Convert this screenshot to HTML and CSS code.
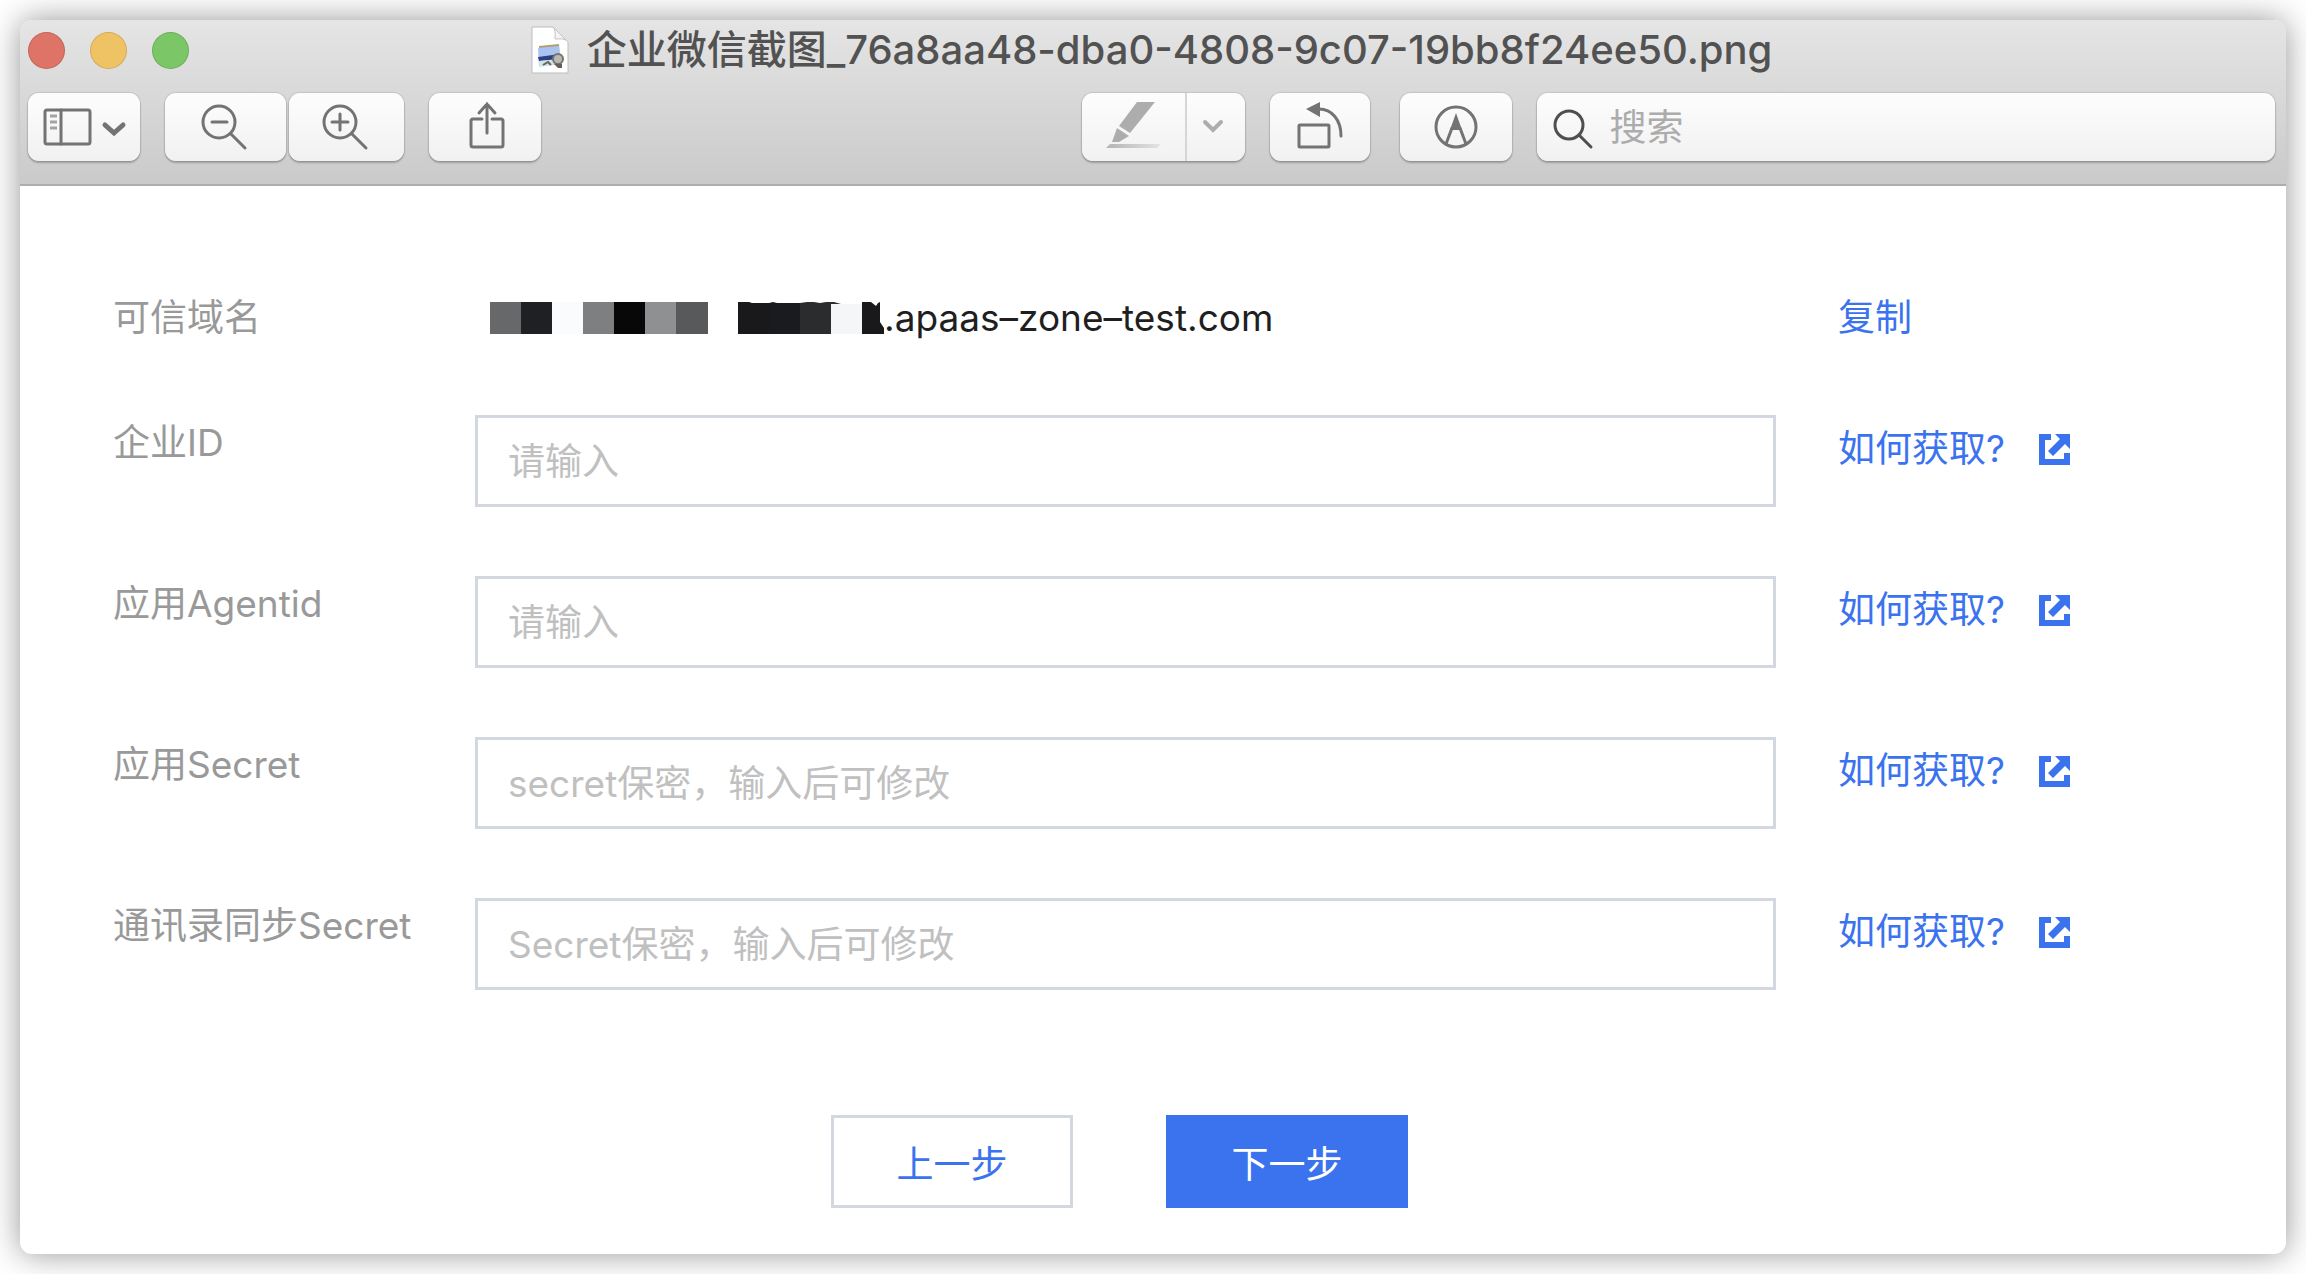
FILE: index.html
```html
<!DOCTYPE html>
<html lang="zh-CN">
<head>
  <meta charset="UTF-8">
  <title>企业微信截图</title>
  <meta name="viewport" content="width=device-width, initial-scale=1.0">
  <link rel="stylesheet" href="styles.css">
</head>
<body>
  <div class="window">
    <header class="chrome">
      <div class="titlebar">
        <div class="lights">
          <button class="light red" aria-label="关闭"></button>
          <button class="light yellow" aria-label="最小化"></button>
          <button class="light green" aria-label="缩放"></button>
        </div>
        <h1 class="title">
          <svg width="38" height="48" viewBox="0 0 38 48">
            <path d="M1 1H22L37 16V47H1Z" fill="#fff" stroke="#bdbdbd"/>
            <path d="M22 1C25 5 24 9 24 13C29 13 34 12 37 16Z" fill="#f4f4f4" stroke="#c4c4c4"/>
            <path d="M8 20L28 18L29 37L9 39Z" fill="#b39b74"/>
            <path d="M7 22L28 20L30 37L8 40Z" fill="#a9c4f3"/>
            <path d="M7 31L29 28V33L8 35Z" fill="#28427f"/>
            <path d="M8 35L29 33L30 38L8 41Z" fill="#cfe3ee"/>
            <path d="M12 39L17 36L20 39" stroke="#6b6257" stroke-width="2" fill="none"/>
            <circle cx="27" cy="33" r="5" fill="#b9b9b4" stroke="#77726b" stroke-width="2"/>
            <path d="M23 38H31V42H27Z" fill="#645f58"/>
          </svg>
          <span>企业微信截图_76a8aa48-dba0-4808-9c07-19bb8f24ee50.png</span>
        </h1>
      </div>

      <div class="toolbar">
        <div class="tools-left">
          <button class="tool" aria-label="边栏">
            <svg width="112" height="68" viewBox="0 0 112 68">
              <rect x="17" y="17" width="45" height="34" rx="2" class="line"/>
              <path d="M33 17V51" class="line"/>
              <path d="M22 23H29M22 29H29M22 35H29" stroke="#a3a3a3" stroke-width="3"/>
              <path d="M77 32L86 40L95 32" class="line bold"/>
            </svg>
          </button>
          <div class="zoom">
            <button class="tool" aria-label="缩小">
              <svg width="121" height="68" viewBox="0 0 121 68">
                <circle cx="54" cy="29" r="16" class="line"/>
                <path d="M47 29H62M66 41L80 55" class="line"/>
              </svg>
            </button>
            <button class="tool" aria-label="放大">
              <svg width="115" height="68" viewBox="0 0 115 68">
                <circle cx="51" cy="29" r="16" class="line"/>
                <path d="M43 29H59M51 21V37M63 41L77 55" class="line"/>
              </svg>
            </button>
          </div>
          <button class="tool" aria-label="共享">
            <svg width="112" height="68" viewBox="0 0 112 68">
              <path d="M53 26H44Q42 26 42 28V52Q42 54 44 54H72Q74 54 74 52V28Q74 26 72 26H63" class="line"/>
              <path d="M58 40V11M50 20L58 11L66 20" class="line"/>
            </svg>
          </button>
        </div>

        <div class="tool split">
          <button aria-label="高亮标记">
            <svg width="103" height="68" viewBox="0 0 103 68">
              <defs>
                <linearGradient id="ink">
                  <stop offset="0" stop-color="#b4b4b4"/>
                  <stop offset="1" stop-color="#e4e4e4"/>
                </linearGradient>
              </defs>
              <path d="M55 9H73L48 40L37 33Z" fill="#adadad"/>
              <path d="M35 35L47 43L37 49H30Z" fill="#adadad"/>
              <path d="M28 51H79L75 55H24Z" fill="url(#ink)"/>
            </svg>
          </button>
          <button aria-label="高亮颜色">
            <svg width="58" height="68" viewBox="0 0 58 68">
              <path d="M18 29L26 37L34 29" class="line bold pale"/>
            </svg>
          </button>
        </div>
        <button class="tool" aria-label="旋转">
          <svg width="100" height="68" viewBox="0 0 100 68">
            <rect x="29" y="32" width="30" height="22" rx="1" class="line"/>
            <path d="M49 16C62 16 71 27 71 43" class="line"/>
            <path d="M36 16L50 9V24Z" fill="#737373"/>
          </svg>
        </button>
        <button class="tool markup" aria-label="标记">
          <svg width="112" height="68" viewBox="0 0 112 68">
            <circle cx="56" cy="34" r="20" class="line"/>
            <path d="M52 35L46 51M60 35L66 51" class="line"/>
            <path d="M56 20L62 37H50Z" fill="#737373"/>
          </svg>
        </button>
        <label class="tool search">
          <svg width="73" height="68" viewBox="0 0 73 68">
            <circle cx="32" cy="32" r="14" class="line dark"/>
            <path d="M43 43L54 54" class="line dark"/>
          </svg>
          <input type="search" placeholder="搜索" aria-label="搜索">
        </label>
      </div>
    </header>

    <form class="form">
      <div class="row">
        <span class="name">可信域名</span>
        <div class="domain">
          <svg width="394" height="32" viewBox="0 0 394 32">
            <rect x="0" y="0" width="31" height="32" fill="#67686a"/>
            <rect x="31" y="0" width="31" height="32" fill="#1f2024"/>
            <rect x="62" y="0" width="31" height="32" fill="#fafbfd"/>
            <rect x="93" y="0" width="31" height="32" fill="#7e7f81"/>
            <rect x="124" y="0" width="31" height="32" fill="#080808"/>
            <rect x="155" y="0" width="31" height="32" fill="#8f9092"/>
            <rect x="186" y="0" width="32" height="32" fill="#58595b"/>
            <path d="M248 0H259L262 1H279V32H248Z" fill="#19191b"/>
            <path d="M279 1L283 0L287 1H310V32H279Z" fill="#191b1f"/>
            <path d="M310 1L317 0H324L330 1L336 0H344L351 2H341V32H310Z" fill="#2b2c2e"/>
            <rect x="341" y="2" width="31" height="30" fill="#f5f6f8"/>
            <path d="M372 0H381L386 4L388 1L390 0V20L394 26V32H372Z" fill="#19191b"/>
          </svg>
          <span>.apaas–zone–test.com</span>
        </div>
        <button type="button" class="copy">复制</button>
      </div>

      <div class="row">
        <label class="name" for="corpId">企业ID</label>
        <input class="field" id="corpId" type="text" placeholder="请输入">
        <a class="help" href="#">如何获取?
          <svg width="31" height="31" viewBox="0 0 31 31"><path d="M0 0H12V6H6V25H25V19H31V31H0Z"/><path d="M16 0H31V15L26 10L14 22L9 17L21 5Z"/></svg>
        </a>
      </div>

      <div class="row">
        <label class="name" for="agentId">应用Agentid</label>
        <input class="field" id="agentId" type="text" placeholder="请输入">
        <a class="help" href="#">如何获取?
          <svg width="31" height="31" viewBox="0 0 31 31"><path d="M0 0H12V6H6V25H25V19H31V31H0Z"/><path d="M16 0H31V15L26 10L14 22L9 17L21 5Z"/></svg>
        </a>
      </div>

      <div class="row">
        <label class="name" for="appSecret">应用Secret</label>
        <input class="field" id="appSecret" type="text" placeholder="secret保密，输入后可修改">
        <a class="help" href="#">如何获取?
          <svg width="31" height="31" viewBox="0 0 31 31"><path d="M0 0H12V6H6V25H25V19H31V31H0Z"/><path d="M16 0H31V15L26 10L14 22L9 17L21 5Z"/></svg>
        </a>
      </div>

      <div class="row">
        <label class="name" for="syncSecret">通讯录同步Secret</label>
        <input class="field" id="syncSecret" type="text" placeholder="Secret保密，输入后可修改">
        <a class="help" href="#">如何获取?
          <svg width="31" height="31" viewBox="0 0 31 31"><path d="M0 0H12V6H6V25H25V19H31V31H0Z"/><path d="M16 0H31V15L26 10L14 22L9 17L21 5Z"/></svg>
        </a>
      </div>

      <div class="actions">
        <button type="button" class="btn">上一步</button>
        <button type="button" class="btn primary">下一步</button>
      </div>
    </form>
  </div>
</body>
</html>
```

FILE: styles.css
```css
* {
  box-sizing: border-box;
}

body {
  margin: 0;
  padding: 20px;
  background: #fff;
  font-family: Inter, "Noto Sans CJK SC", sans-serif;
  font-size: 37px;
  color: #1f1f1f;
}

button,
input {
  font: inherit;
}

button {
  padding: 0;
  border: none;
  background: none;
  cursor: pointer;
}

svg {
  display: block;
  flex: none;
}

.window {
  min-height: calc(100vh - 40px);
  border-radius: 12px;
  background: #fff;
  box-shadow: 0 0 32px rgba(0, 0, 0, 0.42);
  overflow: hidden;
}

/* window chrome */
.chrome {
  padding: 0 11px 23px 8px;
  background: linear-gradient(#e5e5e5, #cacaca);
  border-bottom: 2px solid #adadad;
}

.titlebar {
  display: grid;
  grid-template-columns: 1fr auto 1fr;
  align-items: center;
  height: 60px;
  margin-bottom: 13px;
}

.lights {
  display: flex;
  gap: 25px;
}

.light {
  width: 37px;
  height: 37px;
  border-radius: 50%;
  border: 1px solid rgba(0, 0, 0, 0.12);
}

.red { background: #de7368; }
.yellow { background: #efc364; }
.green { background: #7bc667; }

.title {
  display: flex;
  align-items: center;
  gap: 18px;
  margin: 0;
  font-size: 40px;
  line-height: 56px;
  font-weight: 500;
  color: #525252;
}

.toolbar {
  display: flex;
  gap: 25px;
}

.tools-left {
  display: flex;
  flex: 516 0 auto;
  gap: 25px;
}

.zoom {
  display: flex;
  gap: 3px;
}

.tool {
  height: 68px;
  border-radius: 11px;
  background: linear-gradient(#fdfdfd, #f1f1f1);
  box-shadow: 0 0 1px 1px rgba(0, 0, 0, 0.1), 0 2px 2px rgba(0, 0, 0, 0.22);
}

.split {
  display: flex;
}

.split button + button {
  border-left: 2px solid #d6d6d6;
}

.markup {
  margin-left: 5px;
}

.line {
  fill: none;
  stroke: #737373;
  stroke-width: 3;
  stroke-linecap: round;
}

.bold { stroke-width: 5; }
.pale { stroke: #adadad; stroke-width: 4; }
.dark { stroke: #4f4f4f; }

.search {
  display: flex;
  flex: 739 1 0;
  align-items: center;
}

.search input {
  flex: 1;
  min-width: 0;
  padding: 0;
  border: none;
  background: none;
  outline: none;
}

.search input::placeholder {
  color: #acacac;
  opacity: 1;
}

/* settings form */
.form {
  padding: 104px 160px 46px 93px;
}

.row {
  display: grid;
  grid-template-columns: 362px 1fr 350px;
  align-items: start;
  margin-bottom: 69px;
  line-height: 56px;
}

.name {
  color: #999;
}

.domain {
  display: flex;
  align-items: center;
  padding-left: 15px;
}

.field {
  width: 100%;
  height: 92px;
  padding: 0 30px;
  border: 3px solid #d3d8e0;
  background: #fff;
  outline: none;
}

.field::placeholder {
  color: #c0c0c0;
  opacity: 1;
}

.copy,
.help {
  justify-self: start;
  margin-left: 62px;
  color: #3b73ef;
  text-decoration: none;
}

.help {
  display: flex;
  align-items: center;
  gap: 34px;
  padding-top: 6px;
  white-space: nowrap;
}

.help svg {
  fill: #3b73ef;
}

.actions {
  display: flex;
  justify-content: center;
  gap: 93px;
  padding-top: 56px;
}

.btn {
  width: 242px;
  height: 93px;
  border: 3px solid #d3d8e0;
  background: #fff;
  color: #3b73ef;
}

.primary {
  border-color: #3b73ef;
  background: #3b73ef;
  color: #fff;
}
```
